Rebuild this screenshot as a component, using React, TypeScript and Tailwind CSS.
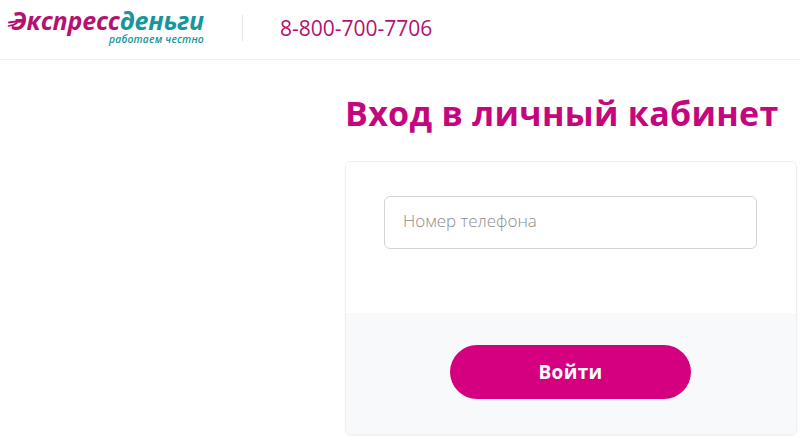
export default function App() {
  return (
    <div className="w-[800px] h-[441px] overflow-hidden bg-white font-['Open_Sans',sans-serif]">
      <header className="h-[60px] border-b border-[#f0f0f0] flex items-start">
        <div className="relative w-[204px] mt-[10px] shrink-0 flex flex-col items-end">
          <div className="text-[25px] leading-[21px] italic font-bold tracking-[-0.2px] whitespace-nowrap">
            <span className="text-[#b5126f]">Экспресс</span>
            <span className="text-[#16969c]">деньги</span>
          </div>
          <div className="mt-[2px] text-[10.3px] leading-[13px] italic text-[#16969c] font-semibold tracking-[0.2px] whitespace-nowrap">
            работаем честно
          </div>
          {/* swoosh on the logo's first letter */}
          <svg className="absolute left-[7px] top-[5px]" width="16" height="12" viewBox="0 0 16 12" fill="none">
            <path d="M2 7.5 C6 6.5 10 6.5 15 6.5" stroke="#b5126f" strokeWidth="2" strokeLinecap="round" />
            <path d="M1.5 11 C5 10.5 8 9.5 10 8" stroke="#b5126f" strokeWidth="1.6" strokeLinecap="round" />
          </svg>
        </div>
        <div className="w-px h-[26px] bg-[#e4e4e4] ml-[38px] mt-[15px]" />
        <div className="ml-[37px] mt-[14px] text-[21px] leading-[28px] text-[#b5126f]">
          8-800-700-7706
        </div>
      </header>
      <main className="pl-[345px] pr-[3px]">
        <h1 className="mt-[33px] h-[41px] text-[34px] leading-[41px] font-bold text-[#c4077d] tracking-[0.3px] whitespace-nowrap">
          Вход в личный кабинет
        </h1>
        <div className="mt-[27px] h-[274px] rounded-[6px] border border-[#efefef] overflow-hidden flex flex-col shadow-[0_1px_2px_rgba(0,0,0,0.05)]">
          <div className="h-[151px] bg-white px-[38px] pt-[34px]">
            <div className="w-[373px] h-[53px] rounded-[6px] border border-[#d4d4d4] pl-[18px] pb-[3px] flex items-center text-[17px] font-light text-[#8c8c8c]">
              Номер телефона
            </div>
          </div>
          <div className="flex-1 bg-[#f8f9fb] flex justify-start pt-[32px] pl-[104px]">
            <button className="w-[241px] h-[54px] rounded-full bg-[#d5007f] text-white text-[19px] font-bold tracking-[0.3px]">
              Войти
            </button>
          </div>
        </div>
      </main>
    </div>
  );
}
